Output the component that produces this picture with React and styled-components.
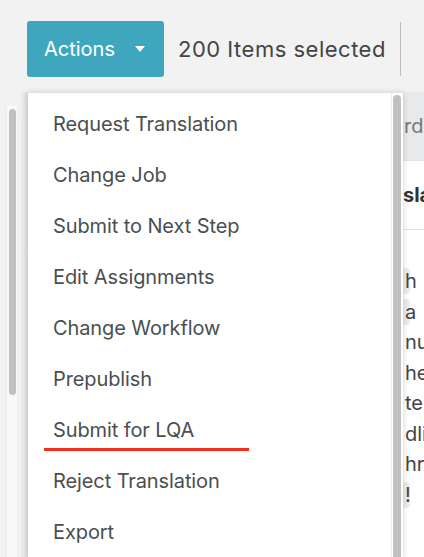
import React from 'react';
import styled, { createGlobalStyle } from 'styled-components';

const GlobalStyle = createGlobalStyle`
  html, body {
    margin: 0;
    padding: 0;
    background: #f2f2f2;
    overflow: hidden;
  }
  body {
    font-family: Inter, 'Open Sans', sans-serif;
  }
`;

const menuItems = [
  'Request Translation',
  'Change Job',
  'Submit to Next Step',
  'Edit Assignments',
  'Change Workflow',
  'Prepublish',
  'Submit for LQA',
  'Reject Translation',
  'Export',
];

const tableRows = [
  { text: 'h', pill: true },
  { text: 'a', pill: true },
  { text: 'nu' },
  { text: 'he' },
  { text: 'ter' },
  { text: 'dli' },
  { text: 'hr' },
  { text: '!', pill: true },
];

export default function App() {
  return (
    <>
      <GlobalStyle />
      <Page>
        <Toolbar>
          <ActionsButton>
            Actions
            <Caret />
          </ActionsButton>
          <SelectedCount>200 Items selected</SelectedCount>
          <Divider />
        </Toolbar>
        <Workspace>
          <Gutter>
            <GutterTrack>
              <GutterThumb />
            </GutterTrack>
          </Gutter>
          <Menu>
            <MenuList>
              {menuItems.map((item) => (
                <MenuItem key={item} marked={item === 'Submit for LQA'}>
                  {item}
                </MenuItem>
              ))}
            </MenuList>
            <MenuScroll>
              <MenuThumb />
            </MenuScroll>
          </Menu>
          <TablePeek>
            <PeekHeader>rds</PeekHeader>
            <PeekTitle>sla</PeekTitle>
            <PeekBody>
              {tableRows.map((row, i) => (
                <PeekRow key={i}>
                  {row.pill && <Pill />}
                  <PeekText>{row.text}</PeekText>
                </PeekRow>
              ))}
            </PeekBody>
          </TablePeek>
        </Workspace>
      </Page>
    </>
  );
}

const Page = styled.div`
  width: 424px;
  height: 557px;
  overflow: hidden;
  display: flex;
  flex-direction: column;
`;

const Toolbar = styled.div`
  display: flex;
  align-items: center;
  padding: 21px 0 0 27px;
  height: 56px;
`;

const ActionsButton = styled.button`
  display: flex;
  align-items: center;
  box-sizing: border-box;
  width: 137px;
  height: 56px;
  padding: 0 0 0 17px;
  border: none;
  border-radius: 3px;
  background: #3fa7bd;
  color: #fff;
  font-family: Inter, 'Open Sans', sans-serif;
  font-size: 20px;
  font-weight: 400;
  cursor: pointer;
`;

const Caret = styled.span`
  margin-left: 20px;
  width: 0;
  height: 0;
  border-left: 5.5px solid transparent;
  border-right: 5.5px solid transparent;
  border-top: 6px solid #fff;
`;

const SelectedCount = styled.span`
  margin-left: 14px;
  font-size: 22px;
  color: #444;
  letter-spacing: 0.5px;
`;

const Divider = styled.span`
  margin-left: 14px;
  width: 1px;
  height: 54px;
  background: #bdbdbd;
`;

const Workspace = styled.div`
  display: flex;
  flex: 1;
  margin-top: 15px;
  min-height: 0;
`;

const Gutter = styled.div`
  width: 28px;
  flex-shrink: 0;
  padding-top: 14px;
  box-sizing: border-box;
  background: linear-gradient(to right, #f2f2f2 0 19px, #eaeaea 23px, #dedede 28px);
`;

const GutterTrack = styled.div`
  margin-left: 6px;
  width: 12px;
  height: 100%;
  box-sizing: border-box;
  background: #f9f9f9;
  border-left: 1px solid #ececec;
  border-right: 1px solid #ececec;
  padding: 3px 1.5px 0;
`;

const GutterThumb = styled.div`
  height: 286px;
  background: #c1c1c1;
  border-radius: 4px;
`;

const Menu = styled.div`
  display: flex;
  width: 375px;
  flex-shrink: 0;
  background: #fff;
  border-top: 1px solid #e2e2e2;
  box-shadow: 0 1px 6px rgba(0, 0, 0, 0.18);
  position: relative;
  z-index: 2;
`;

const MenuList = styled.ul`
  flex: 1;
  list-style: none;
  margin: 0;
  padding: 5px 0 0;
`;

const MenuItem = styled.li`
  position: relative;
  height: 51px;
  display: flex;
  align-items: center;
  padding-left: 25px;
  font-size: 20px;
  color: #4a4e51;
  letter-spacing: -0.1px;

  &::after {
    content: '';
    display: ${({ marked }) => (marked ? 'block' : 'none')};
    position: absolute;
    left: 16px;
    top: 44px;
    width: 205px;
    height: 3px;
    background: #f2301c;
  }
`;

const MenuScroll = styled.div`
  width: 12px;
  flex-shrink: 0;
  box-sizing: border-box;
  border-left: 1px solid #ededed;
  padding: 2px 2px 0 1px;
`;

const MenuThumb = styled.div`
  height: 100%;
  background: #c1c1c1;
  border-radius: 4px 4px 0 0;
`;

const TablePeek = styled.div`
  flex: 1;
  overflow: hidden;
  display: flex;
  flex-direction: column;
  background: #fff;
  white-space: nowrap;
  font-size: 20px;
  color: #444;
`;

const PeekHeader = styled.div`
  height: 68px;
  display: flex;
  align-items: center;
  background: #e8e9ea;
  color: #777;
  padding-left: 1px;
`;

const PeekTitle = styled.div`
  height: 68px;
  display: flex;
  align-items: center;
  font-weight: 700;
  color: #333;
  border-top: 1px solid #e3e3e3;
  border-bottom: 1px solid #e3e3e3;
`;

const PeekBody = styled.div`
  padding-top: 36px;
`;

const PeekRow = styled.div`
  position: relative;
  height: 30.5px;
  display: flex;
  align-items: center;
  padding-left: 2px;
`;

const PeekText = styled.span`
  position: relative;
`;

const Pill = styled.span`
  position: absolute;
  left: 0;
  top: 2px;
  width: 7px;
  height: 26px;
  background: #ececec;
  border-radius: 0 4px 4px 0;
`;
